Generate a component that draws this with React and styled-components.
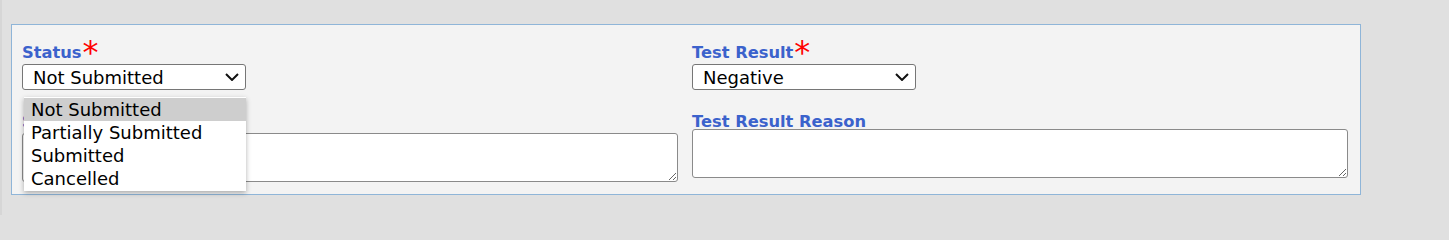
import styled, { createGlobalStyle } from 'styled-components'

const GlobalStyle = createGlobalStyle`
  html, body {
    margin: 0;
    padding: 0;
    background: #e0e0e0;
    overflow: hidden;
  }
  * {
    box-sizing: border-box;
  }
`

const statusOptions = ['Not Submitted', 'Partially Submitted', 'Submitted', 'Cancelled']

export default function App() {
  return (
    <>
      <GlobalStyle />
      <Page>
        <Panel>
          <Field>
            <Label>
              Status<Required>*</Required>
            </Label>
            <SelectWrap>
              <SelectBox $width={224}>
                <span>Not Submitted</span>
                <Chevron />
              </SelectBox>
              <OptionList>
                {statusOptions.map((o, i) => (
                  <OptionItem key={o} $active={i === 0}>
                    {o}
                  </OptionItem>
                ))}
              </OptionList>
            </SelectWrap>
          </Field>
          <Field>
            <Label>
              Test Result<Required>*</Required>
            </Label>
            <SelectBox $width={224}>
              <span>Negative</span>
              <Chevron />
            </SelectBox>
          </Field>
          <Field>
            <Label>
              Status Reason<Required>*</Required>
            </Label>
            <TextArea />
          </Field>
          <Field>
            <Label>Test Result Reason</Label>
            <TextArea />
          </Field>
        </Panel>
      </Page>
    </>
  )
}

function Chevron() {
  return (
    <ChevronSvg width="14" height="8" viewBox="0 0 14 8">
      <path d="M1 1 L7 7 L13 1" fill="none" stroke="#111" strokeWidth="2" />
    </ChevronSvg>
  )
}

const Page = styled.div`
  height: 215px;
  padding: 24px 0 0 9px;
  border-left: 2px solid #d6d6d6;
  font-family: 'DejaVu Sans', Verdana, sans-serif;
`

const Panel = styled.div`
  width: 1350px;
  height: 171px;
  background: #f3f3f3;
  border: 1px solid #8fb5d8;
  padding: 20px 11px 0 10px;
  display: grid;
  grid-template-columns: 656px 656px;
  align-content: start;
  column-gap: 14px;
  row-gap: 24px;
  align-items: start;
`

const Field = styled.div`
  display: flex;
  flex-direction: column;
  align-items: flex-start;
`

const Label = styled.label`
  display: block;
  font-size: 16.3px;
  line-height: 15px;
  font-weight: bold;
  color: #3b62cc;
`

const Required = styled.span`
  display: inline-block;
  vertical-align: top;
  height: 19px;
  margin-left: 1px;
  color: #ff0000;
  font-size: 32px;
  line-height: 14.5px;
  font-weight: normal;
`

const SelectWrap = styled.div`
  position: relative;
`

const SelectBox = styled.div`
  width: ${p => p.$width}px;
  height: 26px;
  background: #fff;
  border: 1px solid #767676;
  border-radius: 3px;
  display: flex;
  align-items: center;
  justify-content: space-between;
  padding: 0 6px 0 10px;
  font-size: 18px;
  color: #000;
`

const ChevronSvg = styled.svg`
  display: block;
`

const OptionList = styled.ul`
  position: absolute;
  top: calc(100% + 7px);
  left: 2px;
  width: 222px;
  margin: 0;
  padding: 1px 0 1px;
  list-style: none;
  background: #fff;
  box-shadow: 0 2px 5px rgba(0, 0, 0, 0.3);
  z-index: 2;
`

const OptionItem = styled.li`
  height: 23px;
  line-height: 23px;
  padding-left: 7px;
  font-size: 18px;
  color: #000;
  background: ${p => (p.$active ? '#cecece' : 'transparent')};
`

const TextArea = styled.textarea`
  width: 656px;
  height: 49px;
  margin: 0;
  background: #fff;
  border: 1px solid #8a8a8a;
  border-radius: 3px;
  font-family: inherit;
  font-size: 14px;
  resize: both;
`
